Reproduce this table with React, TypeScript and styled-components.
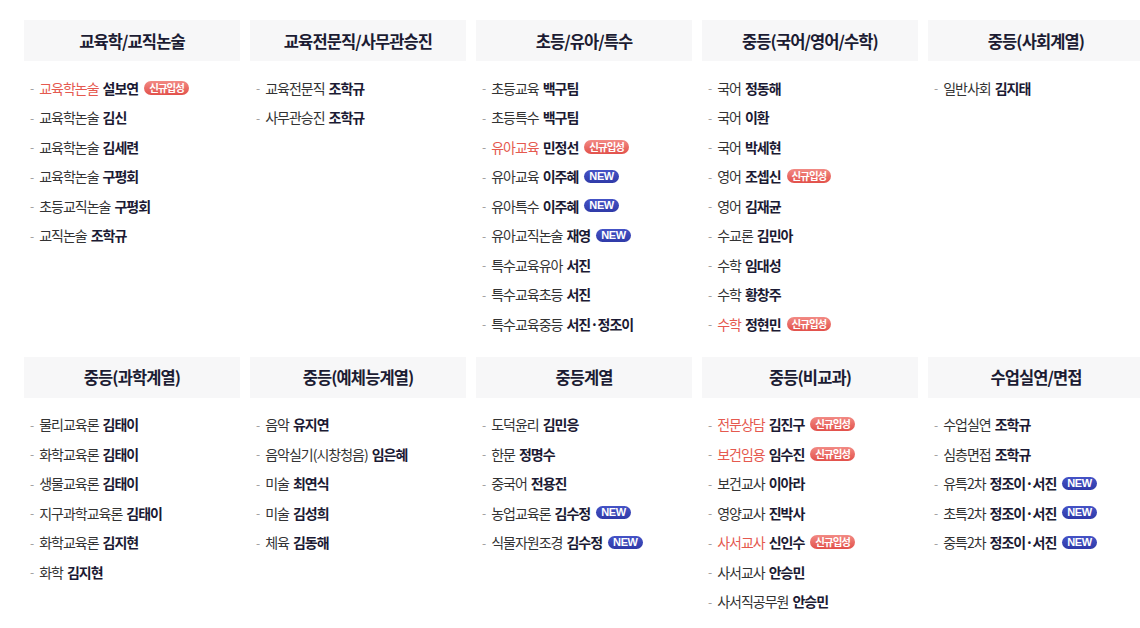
import React from "react";
import styled, { createGlobalStyle } from "styled-components";

type Badge = "new" | "entry";

interface Lecture {
  subject: string;
  teacher: string;
  highlight?: boolean;
  badge?: Badge;
}

interface Category {
  title: string;
  items: Lecture[];
}

const GlobalStyle = createGlobalStyle`
  html, body {
    margin: 0;
    padding: 0;
    background: #ffffff;
    overflow: hidden;
  }
  body {
    font-family: "Noto Sans CJK KR", "Noto Sans", sans-serif;
    color: #333;
  }
`;

const Board = styled.div`
  display: grid;
  grid-template-columns: repeat(5, 216px);
  column-gap: 10px;
  row-gap: 18px;
  padding: 20px 0 0 24px;
  width: 1120px;
`;

const Section = styled.section`
  display: flex;
  flex-direction: column;
`;

const SectionTitle = styled.h2`
  margin: 0;
  height: 41px;
  display: flex;
  align-items: center;
  justify-content: center;
  background: #f7f7f8;
  font-size: 16.5px;
  font-weight: 600;
  letter-spacing: -0.9px;
  color: #1c1c33;
`;

const List = styled.ul`
  list-style: none;
  margin: 0;
  padding: 12px 0 0 6px;
`;

const Item = styled.li`
  display: flex;
  align-items: center;
  height: 29.5px;
  font-size: 14px;
  letter-spacing: -1px;
  white-space: nowrap;
`;

const Dash = styled.span`
  color: #999;
  margin-right: 6px;
  font-size: 12px;
`;

const Subject = styled.span<{ $highlight?: boolean }>`
  color: ${({ $highlight }) => ($highlight ? "#e5594f" : "#333")};
  margin-right: 4px;
`;

const Teacher = styled.strong`
  font-weight: 700;
  color: #1b1a33;
`;

const Pill = styled.span<{ $kind: Badge }>`
  display: inline-flex;
  align-items: center;
  justify-content: center;
  margin-left: 6px;
  height: ${({ $kind }) => ($kind === "new" ? "13px" : "14px")};
  padding: 0 5px;
  border-radius: 8px;
  color: #fff;
  font-weight: 700;
  letter-spacing: ${({ $kind }) => ($kind === "new" ? "-0.4px" : "-1px")};
  font-size: ${({ $kind }) => ($kind === "new" ? "11px" : "10.5px")};
  font-family: ${({ $kind }) =>
    $kind === "new"
      ? `"Liberation Sans", Arial, sans-serif`
      : `"Noto Sans CJK KR", sans-serif`};
  background: ${({ $kind }) =>
    $kind === "new"
      ? "linear-gradient(#4553c6, #2f3aa8)"
      : "linear-gradient(#f28a84, #e2514b)"};
  line-height: 1;
`;

const categories: Category[] = [
  {
    title: "교육학/교직논술",
    items: [
      { subject: "교육학논술", teacher: "설보연", highlight: true, badge: "entry" },
      { subject: "교육학논술", teacher: "김신" },
      { subject: "교육학논술", teacher: "김세련" },
      { subject: "교육학논술", teacher: "구평회" },
      { subject: "초등교직논술", teacher: "구평회" },
      { subject: "교직논술", teacher: "조학규" },
    ],
  },
  {
    title: "교육전문직/사무관승진",
    items: [
      { subject: "교육전문직", teacher: "조학규" },
      { subject: "사무관승진", teacher: "조학규" },
    ],
  },
  {
    title: "초등/유아/특수",
    items: [
      { subject: "초등교육", teacher: "백구팀" },
      { subject: "초등특수", teacher: "백구팀" },
      { subject: "유아교육", teacher: "민정선", highlight: true, badge: "entry" },
      { subject: "유아교육", teacher: "이주혜", badge: "new" },
      { subject: "유아특수", teacher: "이주혜", badge: "new" },
      { subject: "유아교직논술", teacher: "재영", badge: "new" },
      { subject: "특수교육유아", teacher: "서진" },
      { subject: "특수교육초등", teacher: "서진" },
      { subject: "특수교육중등", teacher: "서진·정조이" },
    ],
  },
  {
    title: "중등(국어/영어/수학)",
    items: [
      { subject: "국어", teacher: "정동해" },
      { subject: "국어", teacher: "이환" },
      { subject: "국어", teacher: "박세현" },
      { subject: "영어", teacher: "조셉신", badge: "entry" },
      { subject: "영어", teacher: "김재균" },
      { subject: "수교론", teacher: "김민아" },
      { subject: "수학", teacher: "임대성" },
      { subject: "수학", teacher: "황창주" },
      { subject: "수학", teacher: "정현민", highlight: true, badge: "entry" },
    ],
  },
  {
    title: "중등(사회계열)",
    items: [{ subject: "일반사회", teacher: "김지태" }],
  },
  {
    title: "중등(과학계열)",
    items: [
      { subject: "물리교육론", teacher: "김태이" },
      { subject: "화학교육론", teacher: "김태이" },
      { subject: "생물교육론", teacher: "김태이" },
      { subject: "지구과학교육론", teacher: "김태이" },
      { subject: "화학교육론", teacher: "김지현" },
      { subject: "화학", teacher: "김지현" },
    ],
  },
  {
    title: "중등(예체능계열)",
    items: [
      { subject: "음악", teacher: "유지연" },
      { subject: "음악실기(시창청음)", teacher: "임은혜" },
      { subject: "미술", teacher: "최연식" },
      { subject: "미술", teacher: "김성희" },
      { subject: "체육", teacher: "김동해" },
    ],
  },
  {
    title: "중등계열",
    items: [
      { subject: "도덕윤리", teacher: "김민응" },
      { subject: "한문", teacher: "정명수" },
      { subject: "중국어", teacher: "전용진" },
      { subject: "농업교육론", teacher: "김수정", badge: "new" },
      { subject: "식물자원조경", teacher: "김수정", badge: "new" },
    ],
  },
  {
    title: "중등(비교과)",
    items: [
      { subject: "전문상담", teacher: "김진구", highlight: true, badge: "entry" },
      { subject: "보건임용", teacher: "임수진", highlight: true, badge: "entry" },
      { subject: "보건교사", teacher: "이아라" },
      { subject: "영양교사", teacher: "진박사" },
      { subject: "사서교사", teacher: "신인수", highlight: true, badge: "entry" },
      { subject: "사서교사", teacher: "안승민" },
      { subject: "사서직공무원", teacher: "안승민" },
    ],
  },
  {
    title: "수업실연/면접",
    items: [
      { subject: "수업실연", teacher: "조학규" },
      { subject: "심층면접", teacher: "조학규" },
      { subject: "유특2차", teacher: "정조이·서진", badge: "new" },
      { subject: "초특2차", teacher: "정조이·서진", badge: "new" },
      { subject: "중특2차", teacher: "정조이·서진", badge: "new" },
    ],
  },
];

const App: React.FC = () => {
  return (
    <>
      <GlobalStyle />
      <Board>
        {categories.map((cat) => (
          <Section key={cat.title}>
            <SectionTitle>{cat.title}</SectionTitle>
            <List>
              {cat.items.map((item, i) => (
                <Item key={i}>
                  <Dash>-</Dash>
                  <Subject $highlight={item.highlight}>{item.subject}</Subject>
                  <Teacher>{item.teacher}</Teacher>
                  {item.badge && (
                    <Pill $kind={item.badge}>
                      {item.badge === "new" ? "NEW" : "신규입성"}
                    </Pill>
                  )}
                </Item>
              ))}
            </List>
          </Section>
        ))}
      </Board>
    </>
  );
};

export default App;
